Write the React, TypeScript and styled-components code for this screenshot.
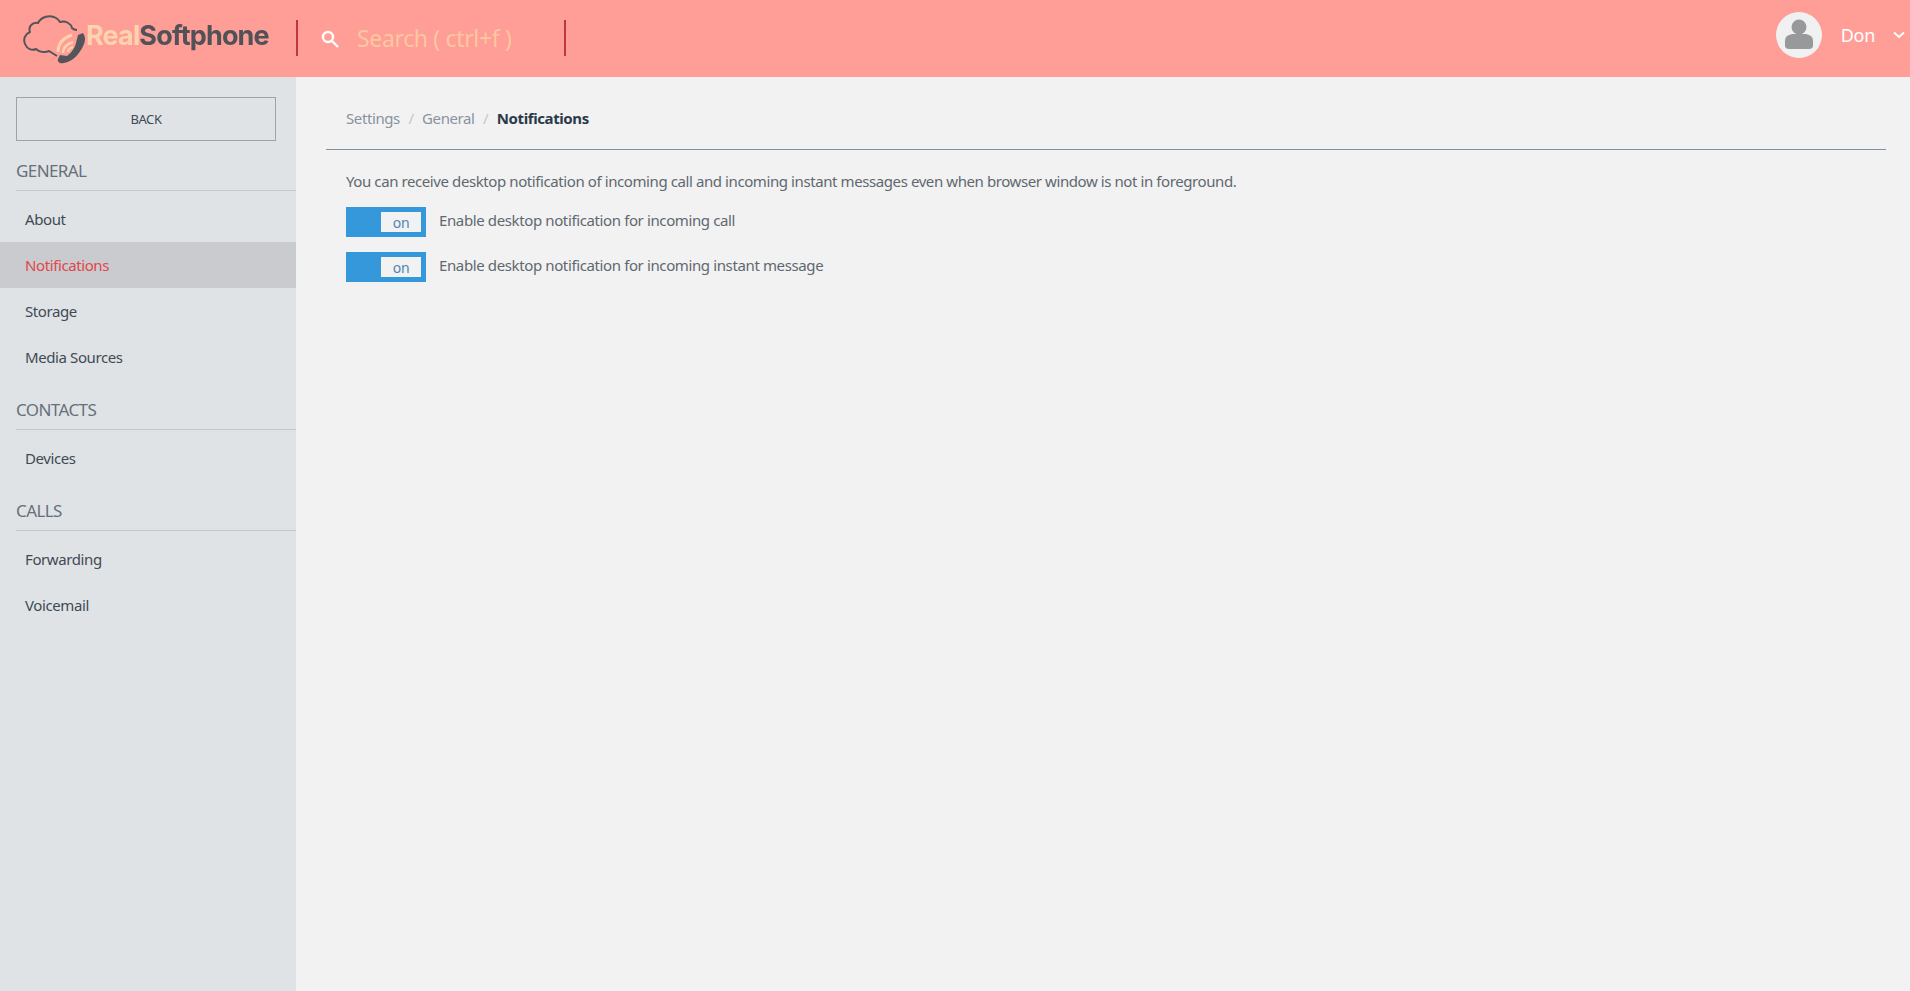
import React from "react";
import styled, { createGlobalStyle } from "styled-components";

const Global = createGlobalStyle`
  html, body { margin: 0; padding: 0; height: 100%; overflow: hidden; }
  body { font-family: "Noto Sans", "Open Sans", sans-serif; background: #f2f2f2; }
  #root { height: 100%; }
`;

const Page = styled.div`
  width: 1910px; height: 991px; display: flex; flex-direction: column; overflow: hidden;
`;
const Header = styled.header`
  height: 77px; flex: none; background: #ff9d97; display: flex; align-items: center;
`;
const LogoBox = styled.div`
  width: 296px; height: 77px; flex: none; display: flex; align-items: center; padding-left: 23px; box-sizing: border-box;
`;
const LogoMark = styled.svg`
  width: 68px; height: 56px; flex: none; margin-top: 1px; filter: blur(0.3px);
`;
const LogoText = styled.span`
  font-family: "Inter", "Liberation Sans", sans-serif; font-weight: 700; font-size: 27px; letter-spacing: -0.85px;
  color: #515258; margin-left: -5px; margin-top: -6px; white-space: nowrap; filter: blur(0.3px);
`;
const LogoLight = styled.span`
  color: #ffd3ae;
`;
const Divider = styled.div`
  width: 2px; height: 36px; background: #c0363a; flex: none; margin-top: -1px;
`;
const SearchBox = styled.div`
  width: 266px; flex: none; display: flex; align-items: center; box-sizing: border-box; padding-left: 23px;
`;
const SearchLabel = styled.span`
  font-size: 23px; color: #fdc8a0; margin-left: 18px; margin-top: -2px; letter-spacing: -0.35px; white-space: nowrap; font-weight: 400;
`;
const UserBox = styled.div`
  margin-left: auto; display: flex; align-items: center; padding: 0 5px 7px 0;
`;
const Avatar = styled.div`
  width: 46px; height: 46px; border-radius: 50%; background: #f1f1f1; display: flex; align-items: center; justify-content: center;
`;
const UserName = styled.span`
  font-size: 18px; color: #fff; margin-left: 19px; margin-right: 18px; letter-spacing: -0.3px;
`;
const Body = styled.div`
  flex: 1; display: flex; min-height: 0;
`;
const Sidebar = styled.aside`
  width: 296px; flex: none; background: #e0e3e6; padding-top: 20px; box-sizing: border-box;
`;
const BackButton = styled.button`
  display: block; width: 260px; height: 44px; margin: 0 0 0 16px; background: transparent; border: 1px solid #9ea3a8;
  font: 400 13px "Noto Sans", sans-serif; letter-spacing: -0.4px; color: #3f4a55; padding: 0; cursor: pointer;
`;
const SectionTitle = styled.div`
  margin-left: 16px; height: 50px; border-bottom: 1px solid #c4c8cc; box-sizing: border-box;
  font-size: 17px; line-height: 24px; color: #66707a; padding-top: 18px; letter-spacing: -0.6px;
`;
const NavList = styled.ul`
  list-style: none; margin: 0; padding: 5px 0 0;
`;
const NavItem = styled.li<{ $active?: boolean }>`
  height: 46px; line-height: 47px; padding-left: 25px; font-size: 15px; letter-spacing: -0.4px;
  color: ${(p) => (p.$active ? "#e0474c" : "#3f4a55")};
  background: ${(p) => (p.$active ? "#c9cbce" : "transparent")};
`;
const Main = styled.main`
  flex: 1; background: #f2f2f2; padding: 0 24px 0 30px; min-width: 0;
`;
const Breadcrumb = styled.nav`
  height: 73px; border-bottom: 1px solid #7f92a3; display: flex; align-items: center; padding: 9px 0 0 20px;
  font-size: 15px; letter-spacing: -0.4px; color: #89939d; box-sizing: border-box;
`;
const Sep = styled.span`
  color: #c3c8cc; margin: 0 8.5px;
`;
const Current = styled.strong`
  color: #2a3a4a; font-weight: 700; margin-left: 0;
`;
const Intro = styled.p`
  margin: 20px 0 0 20px; font-size: 15px; line-height: 22px; color: #5f6870; letter-spacing: -0.41px;
`;
const SwitchRow = styled.label`
  display: flex; align-items: center; height: 30px; margin: 0 0 15px 20px; font-size: 15px; letter-spacing: -0.38px; color: #5f6870;
  &:first-of-type { margin-top: 15px; }
`;
const Switch = styled.span`
  width: 80px; height: 30px; background: #3498db; flex: none; box-sizing: border-box; padding: 5px; display: flex; justify-content: flex-end; margin-right: 13px;
`;
const Knob = styled.span`
  width: 40px; height: 20px; background: #f2f2f2; color: #4f86b4; font-size: 14px; line-height: 22px; text-align: center;
`;
const RowLabel = styled.span`
  margin-top: -5px;
`;

const sections = [
  { title: "GENERAL", items: ["About", "Notifications", "Storage", "Media Sources"] },
  { title: "CONTACTS", items: ["Devices"] },
  { title: "CALLS", items: ["Forwarding", "Voicemail"] },
];

export default function App() {
  return (
    <Page>
      <Global />
      <Header>
        <LogoBox>
          <LogoMark viewBox="23 9 68 56" fill="none">
            <path d="M57 54 L49 49 C45 51 39 50 36 47 C32 49 27 47 25 42 C23 37 25 32 30 30 C28 25 32 20 38 21 C41 15 50 12 56 16 C59 18 60 20 60 20 C66 18 71 22 72 26 C74 28 76 28 77 28" stroke="#54555b" strokeWidth="2" strokeLinejoin="round" />
            <path d="M58 50 C58 42 63 36 72 33" stroke="#ffd3ae" strokeWidth="3" />
            <path d="M63 51 C63 46 67 42 73 40" stroke="#ffd3ae" strokeWidth="2.4" />
            <path d="M68 50 C68 48 70 46 73 45" stroke="#ffd3ae" strokeWidth="2.2" />
            <path d="M78 33 L83 31 C85 34 86 37 84 42 C80 52 72 60 64 61 C60 62 57 60 58 57 L60 53 L67 54 C71 51 75 46 76 41 Z" fill="#54555b" />
          </LogoMark>
          <LogoText><LogoLight>Real</LogoLight>Softphone</LogoText>
        </LogoBox>
        <Divider />
        <SearchBox>
          <svg width="18" height="18" viewBox="0 0 18 18" fill="none" stroke="#fff">
            <circle cx="7" cy="7" r="5" strokeWidth="2.4" />
            <path d="M11 11 L17 17" strokeWidth="2.4" />
          </svg>
          <SearchLabel>Search ( ctrl+f )</SearchLabel>
        </SearchBox>
        <Divider />
        <UserBox>
          <Avatar>
            <svg width="28" height="32" viewBox="0 0 28 32" fill="#97999b">
              <circle cx="14" cy="8" r="7.5" />
              <path d="M0 27 V22 C0 17 4 15 9 15 H19 C24 15 28 17 28 22 V27 C28 29 26 30 24 30 H4 C2 30 0 29 0 27 Z" />
            </svg>
          </Avatar>
          <UserName>Don</UserName>
          <svg width="12" height="8" viewBox="0 0 12 8" fill="none" stroke="#fff" strokeWidth="2"><path d="M1 1.5 L6 6 L11 1.5" /></svg>
        </UserBox>
      </Header>
      <Body>
        <Sidebar>
          <BackButton>BACK</BackButton>
          {sections.map((s) => (
            <div key={s.title}>
              <SectionTitle>{s.title}</SectionTitle>
              <NavList>
                {s.items.map((i) => (
                  <NavItem key={i} $active={i === "Notifications"}>{i}</NavItem>
                ))}
              </NavList>
            </div>
          ))}
        </Sidebar>
        <Main>
          <Breadcrumb>
            Settings<Sep>/</Sep>General<Sep>/</Sep><Current>Notifications</Current>
          </Breadcrumb>
          <Intro>You can receive desktop notification of incoming call and incoming instant messages even when browser window is not in foreground.</Intro>
          <SwitchRow><Switch><Knob>on</Knob></Switch><RowLabel>Enable desktop notification for incoming call</RowLabel></SwitchRow>
          <SwitchRow><Switch><Knob>on</Knob></Switch><RowLabel>Enable desktop notification for incoming instant message</RowLabel></SwitchRow>
        </Main>
      </Body>
    </Page>
  );
}
